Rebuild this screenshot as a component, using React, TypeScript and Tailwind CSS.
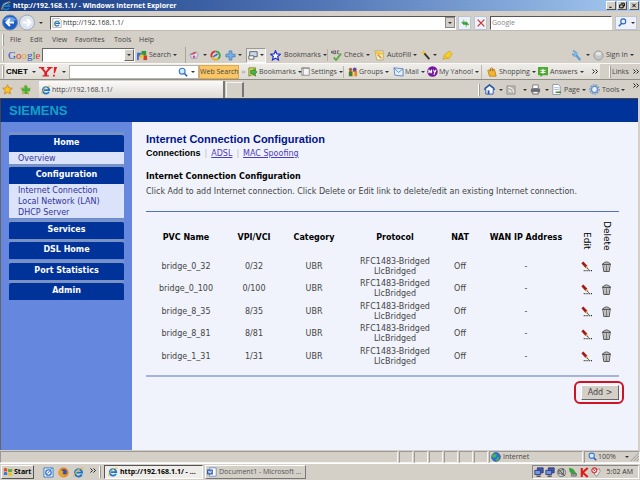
import { useState } from "react";
import type { ReactNode } from "react";

const CONNECTIONS = [
  { name: "bridge_0_32", vpi: "0/32" },
  { name: "bridge_0_100", vpi: "0/100" },
  { name: "bridge_8_35", vpi: "8/35" },
  { name: "bridge_8_81", vpi: "8/81" },
  { name: "bridge_1_31", vpi: "1/31" },
];

const MENU = [
  { title: "Home", links: ["Overview"] },
  { title: "Configuration", links: ["Internet Connection", "Local Network (LAN)", "DHCP Server"] },
  { title: "Services", links: [] },
  { title: "DSL Home", links: [] },
  { title: "Port Statistics", links: [] },
  { title: "Admin", links: [] },
];

function Icon({ children, className = "size-3" }: { children: ReactNode; className?: string }) {
  return (
    <svg viewBox="0 0 12 12" className={`shrink-0 ${className}`} fill="none" aria-hidden="true">
      {children}
    </svg>
  );
}

function IeIcon({ className = "size-3" }: { className?: string }) {
  return (
    <Icon className={className}>
      <path d="M9.6 8.2A4 4 0 1 1 10 6.2H3.6" stroke="#1b75c9" strokeWidth="2" />
      <path d="M2.6 5.2Q4 2.6 7 3" stroke="#5cc0f5" strokeWidth="1" />
      <path d="M1.5 11C-.6 9.3 3.2 4.3 7.3 2c2-1.100 3.700-1.200 3.900.2" stroke="#f0b429" strokeWidth="1.100" />
    </Icon>
  );
}

function PageIeIcon() {
  return (
    <Icon className="size-[10px]">
      <path d="M1 .5h8l2 2v9H1z" fill="#fff" stroke="#aaa" />
      <path d="M8.500 8A2.800 2.800 0 1 1 8.800 6.400H4" stroke="#1b75c9" strokeWidth="1.500" />
      <path d="M2.500 9.500C2 7.500 6 3 9.500 3" stroke="#e0b040" strokeWidth=".8" />
    </Icon>
  );
}

function Caret({ className = "" }: { className?: string }) {
  return (
    <svg viewBox="0 0 4 2" className={`h-[2px] w-1 shrink-0 ${className}`} aria-hidden="true">
      <path d="M0 0h4L2 2z" fill="#333" />
    </svg>
  );
}

function Grip() {
  return <span className="h-3 w-px shrink-0 bg-white shadow-[1px_0_0_#9c9a94]" />;
}

function Magnifier({ className }: { className?: string }) {
  return (
    <Icon className={className}>
      <circle cx="5" cy="5" r="3.500" fill="#d5ebff" stroke="#3b78d8" strokeWidth="1.400" />
      <path d="M8 8l3 3" stroke="#2456b0" strokeWidth="1.800" />
    </Icon>
  );
}

function Tool({ className, icon, label, caret = true }: { className: string; icon: ReactNode; label?: string; caret?: boolean }) {
  return (
    <button type="button" aria-label={label ? undefined : "Toolbar item"} className={`flex shrink-0 items-center gap-px whitespace-nowrap ${className}`}>
      {icon}
      {label && <span>{label}</span>}
      {caret && <Caret className="ml-px" />}
    </button>
  );
}

function Chevrons() {
  return (
    <svg viewBox="0 0 6 5" className="h-[5px] w-[6px] shrink-0" fill="none" aria-hidden="true">
      <path d="M.5.5l2 2-2 2M3.500.5l2 2-2 2" stroke="#222" />
    </svg>
  );
}

function TitleBar() {
  return (
    <header className="flex h-[11px] items-center bg-gradient-to-r from-[#153a83] via-[#5276b5] to-[#a6caf0] pl-px text-white">
      <IeIcon className="size-[10px]" />
      <h1 className="ml-[2px] flex-1 text-[7px] font-bold">http://192.168.1.1/ - Windows Internet Explorer</h1>
      <div className="mr-px flex gap-px">
        {["M3 9h4", "M4 2h6v5H8M2 5h6v5H2z", "M3 3l6 6M9 3l-6 6"].map((d, i) => (
          <button
            key={d}
            type="button"
            aria-label={["Minimize", "Restore", "Close"][i]}
            className={`h-[9px] w-[10px] border border-t-white border-r-[#555] border-b-[#555] border-l-white bg-[#d4d0c8] ${i === 2 ? "ml-px" : ""}`}
          >
            <Icon className="h-[7px] w-2">
              <path d={d} stroke="#000" strokeWidth="1.700" />
            </Icon>
          </button>
        ))}
      </div>
    </header>
  );
}

function AddressRow() {
  const [address, setAddress] = useState("http://192.168.1.1/");
  const square = "flex h-[14px] items-center justify-center border border-[#b8c4d8] bg-[#eef2f8]";

  return (
    <div className="flex h-[17px] items-center border-b border-[#bfbbb3] pt-px pr-[3px] pl-[2px]">
      <svg viewBox="0 0 34 17" className="h-[17px] w-[34px] shrink-0" fill="none" aria-hidden="true">
        <rect x="4" y="2" width="26" height="13" fill="#c7cad0" />
        <circle cx="8" cy="8.500" r="7.500" fill="#1c5fc4" stroke="#6d86ad" />
        <path d="M2 6a6.500 5 0 0 1 12 0q-6 3-12 0" fill="#6ba0e6" />
        <path d="M12 8.500H5M8 5L4.500 8.500 8 12" stroke="#fff" strokeWidth="2" />
        <circle cx="25" cy="8.500" r="7.500" fill="#dfe5ef" stroke="#9da8ba" />
        <path d="M21 8.500h7M25 5l3.500 3.500L25 12" stroke="#fff" strokeWidth="2" />
      </svg>
      <Caret className="mx-[3px]" />
      <div className="ml-[4px] flex h-[14px] flex-1 items-center border border-t-[#555] border-r-white border-b-white border-l-[#555] bg-white pl-px">
        <PageIeIcon />
        <input
          aria-label="Address"
          value={address}
          onChange={(e) => setAddress(e.target.value)}
          className="ml-px min-w-0 flex-1 text-[7px] text-[#333] outline-none"
        />
        <button type="button" aria-label="Show addresses" className="flex h-[11px] w-[10px] items-center justify-center border border-[#888] bg-[#d4d0c8]">
          <Caret />
        </button>
      </div>
      <button type="button" aria-label="Refresh" className={`ml-[2px] w-[13px] ${square}`}>
        <Icon className="size-[10px]">
          <path d="M4.500 2v3M4.500 8L2 5h5zM7.500 11V8M7.500 4.500L5.500 8h5z" stroke="#2f9e33" fill="#2f9e33" strokeWidth=".7" />
        </Icon>
      </button>
      <button type="button" aria-label="Stop" className={`mx-[3px] w-[13px] ${square}`}>
        <Icon className="size-[10px]">
          <path d="M2 2l8 8M10 2l-8 8" stroke="#c83232" strokeWidth="1.500" />
        </Icon>
      </button>
      <input
        aria-label="Search the web"
        placeholder="Google"
        className="h-[14px] w-[122px] border border-t-[#555] border-r-white border-b-white border-l-[#555] bg-white pl-px text-[7px] outline-none placeholder:text-[#888]"
      />
      <button type="button" aria-label="Search" className={`ml-[3px] w-[22px] gap-[4px] ${square}`}>
        <Icon className="size-[9px]">
          <circle cx="7" cy="4.500" r="3.300" stroke="#2563cc" strokeWidth="1.500" />
          <path d="M5 7l-4 4" stroke="#2563cc" strokeWidth="2" />
        </Icon>
        <Caret />
      </button>
    </div>
  );
}

function MenuBar() {
  return (
    <nav className="flex h-[16px] items-center pt-[2px] pl-[2px]">
      <Grip />
      <button type="button" className="ml-[7px] w-5 text-left">File</button>
      <button type="button" className="w-[22px] text-left">Edit</button>
      <button type="button" className="w-[23px] text-left">View</button>
      <button type="button" className="w-[39px] text-left">Favorites</button>
      <button type="button" className="w-[25px] text-left">Tools</button>
      <button type="button" className="text-left">Help</button>
    </nav>
  );
}

function GoogleBar() {
  return (
    <div className="flex h-4 items-center pl-[2px]">
      <Grip />
      <span className="ml-[5px] w-[34px] font-['Liberation_Serif',serif] text-[11px] leading-none">
        <span className="text-[#2a55c8]">G</span>
        <span className="text-[#d83a2a]">o</span>
        <span className="text-[#e0a81c]">o</span>
        <span className="text-[#2a55c8]">g</span>
        <span className="text-[#2b9a42]">l</span>
        <span className="text-[#d83a2a]">e</span>
      </span>
      <div className="flex h-[14px] w-[93px] shrink-0 border border-t-[#666] border-l-[#666] border-r-white border-b-white bg-white">
        <input aria-label="Google search" className="min-w-0 flex-1 outline-none" />
        <button type="button" aria-label="Search history" className="flex w-[10px] items-center justify-center border border-t-white border-r-[#666] border-b-[#666] border-l-white bg-[#d4d0c8]">
          <Caret />
        </button>
      </div>
      <Tool
        className="ml-[2px] w-[45px]"
        label="Search"
        icon={
          <Icon className="size-[11px]">
            <path d="M0 3h5v4H2v4H0z" fill="#3b70d8" />
            <path d="M5 1h5v5H5z" fill="#2a9b3c" />
            <path d="M7 6h4v5H7z" fill="#d63b2f" />
            <path d="M3 5h4v4H3z" fill="#f5c329" />
          </Icon>
        }
      />
      <span className="flex w-[7px] justify-center"><span className="h-4 w-px bg-[#aaa69e]" /></span>
      <Tool
        className="w-[21px]"
        icon={
          <Icon className="mr-[2px] size-[10px]">
            <path d="M1 5l8-3 2 3-2 5H3z" fill="#d9e2f2" stroke="#8d9bb5" />
            <path d="M2 5l5-3 2 2-6 2z" fill="#d64a4a" />
            <circle cx="6" cy="8" r="1.500" fill="#d64a8a" />
          </Icon>
        }
      />
      <Tool
        className="w-[15px]"
        caret={false}
        icon={
          <Icon className="size-[11px]">
            <path d="M6 1.500A4.500 4.500 0 0 0 2 8" stroke="#d73434" strokeWidth="2" />
            <path d="M2 8a4.500 4.500 0 0 0 7 1.500" stroke="#e3b21b" strokeWidth="2" />
            <path d="M9 9.500a4.500 4.500 0 0 0-3-8" stroke="#3aa346" strokeWidth="2" />
            <path d="M4 8c0-3 3-1 4-4" stroke="#3563c9" strokeWidth="1.500" />
          </Icon>
        }
      />
      <Tool
        className="w-[20px]"
        icon={
          <Icon className="size-[11px]">
            <path d="M4.500 1h3v3.500H11v3H7.500V11h-3V7.500H1v-3h3.500z" fill="#79b0e4" stroke="#3d7ab8" strokeWidth=".8" />
          </Icon>
        }
      />
      <Tool
        className="ml-px h-[15px] w-[20px] border border-t-[#999] border-l-[#999] border-r-white border-b-white bg-[#eae8e3] pl-px"
        icon={
          <Icon className="size-[10px]">
            <path d="M2 2h9v6H2z" fill="#c6d9ee" stroke="#555" />
            <path d="M1 7h6v4H1z" fill="#fff" stroke="#555" />
          </Icon>
        }
      />
      <Tool
        className="ml-[4px] w-[57px]"
        label="Bookmarks"
        icon={
          <Icon className="mr-[2px] size-[11px]">
            <path d="M6 .8l1.500 3.500 3.800.3-2.900 2.500.9 3.800L6 8.900l-3.300 2 .9-3.800L.7 4.600l3.800-.3z" fill="#fff" stroke="#2434d0" strokeWidth="1.300" />
          </Icon>
        }
      />
      <span className="mr-[3px] h-3 w-px bg-[#b4b0a8]" />
      <Tool
        className="w-[43px]"
        label="Check"
        icon={
          <Icon className="mr-px size-[11px]">
            <path d="M0 4l1-3 1 3M3 1v3h2V1zM9 1H7v3h2" stroke="#333" strokeWidth=".7" />
            <path d="M3 8l2.500 3L11 4" stroke="#5fa843" strokeWidth="2" />
          </Icon>
        }
      />
      <Tool
        className="w-[47px]"
        label="AutoFill"
        icon={
          <Icon className="mr-px size-[11px]">
            <path d="M1 1h9v10H3z" fill="#f3ecd0" stroke="#b9a876" />
            <path d="M1 1l2 4h7V3z" fill="#f5c82d" />
            <path d="M4 5l4 4" stroke="#d69318" strokeWidth="1.500" />
          </Icon>
        }
      />
      <Tool
        className="w-[21px]"
        icon={
          <Icon className="size-[10px]">
            <path d="M4 4l6 7" stroke="#333" strokeWidth="2.200" />
            <path d="M3 0v6M0 3h6" stroke="#eac634" strokeWidth="1.300" />
          </Icon>
        }
      />
      <Tool
        className="w-3"
        caret={false}
        icon={
          <Icon className="size-[11px]">
            <path d="M1 10l2-5 5-4 3 3-3 5z" fill="#f6cd2b" stroke="#cc9a1b" strokeWidth=".7" />
            <path d="M3 6l4 4" stroke="#d6a015" />
          </Icon>
        }
      />
      <span className="flex-1" />
      <Tool
        className="w-[22px]"
        icon={
          <Icon className="mr-[2px] size-[11px]">
            <path d="M5 5l5 6" stroke="#5c9ed6" strokeWidth="2.500" />
            <path d="M2 1l2.500 1.500L4 5 1.500 4c0 3 3 3.500 4.500 2C8 4.500 6 .5 2 1z" fill="#8cc3ee" stroke="#4a8cc4" strokeWidth=".7" />
          </Icon>
        }
      />
      <Tool
        className="mr-[5px] w-[42px]"
        label="Sign In"
        icon={
          <Icon className="mr-px size-[11px]">
            <circle cx="6" cy="6" r="5" fill="#c5c5c5" stroke="#999" />
            <ellipse cx="6" cy="4" rx="3" ry="2" fill="#e6e6e6" />
          </Icon>
        }
      />
    </div>
  );
}

function YahooBar() {
  return (
    <div className="flex h-[17px] items-center border-t border-b border-t-[#f8f8f6] border-b-[#8f8d88] pl-[2px]">
      <Grip />
      <div className="ml-[2px] flex h-full flex-1 items-center bg-gradient-to-b from-[#eeede9] to-[#dedbd4]">
        <button type="button" className="flex w-[33px] items-center gap-[4px] pl-px">
          <span className="font-['Liberation_Sans',sans-serif] text-[8px] font-bold text-black">CNET</span>
          <Caret />
        </button>
        <button type="button" aria-label="Yahoo" className="flex w-[31px] items-center gap-[4px]">
          <svg viewBox="0 0 20 12" className="h-[11px] w-5" aria-hidden="true">
            <path d="M0 1h6v1.500H5L7.500 6l3-3.500H9V1h6v1.500h-1.500L9 7v3h2v1.500H4V10h2V7L2 2.500H0zM16.500 1H20l-2.500 7h-1.200zM15.500 9.500h2v2h-2z" fill="#e01d2b" />
          </svg>
          <Caret />
        </button>
        <div className="flex h-[14px] w-[130px] shrink-0 items-center border border-[#b5b3ae] bg-white">
          <input aria-label="Yahoo search" className="min-w-0 flex-1 outline-none" />
          <Magnifier className="size-[10px]" />
          <Caret className="mx-[3px]" />
        </div>
        <button type="button" className="h-[14px] w-[40px] shrink-0 border border-[#dfa94a] bg-[#fbc766] whitespace-nowrap">
          Web Search
        </button>
        <span className="flex w-[9px] shrink-0 justify-center text-[#777]">‹›</span>
        <Tool
          className="w-[53px]"
          label="Bookmarks"
          icon={
            <Icon className="size-[10px]">
              <path d="M1 1h8v10L6 9l-5 2z" fill="#e9d45a" stroke="#6d8c32" />
              <path d="M3 4h4V2l4 4-4 4V8H3z" fill="#44b449" stroke="#217d2a" strokeWidth=".6" />
            </Icon>
          }
        />
        <Tool
          className="w-[42px]"
          label="Settings"
          icon={
            <Icon className="size-[9px]">
              <path d="M1 1h10v10H1z" fill="#f5f5f5" stroke="#777" />
              <path d="M1 2h10M3 1v10" stroke="#888" />
            </Icon>
          }
        />
        <span className="mr-[4px] h-3 w-px bg-[#bbb7b0]" />
        <Tool
          className="w-[45px]"
          label="Groups"
          icon={
            <Icon className="size-[10px]">
              <path d="M1 11V6q2-3 4 0v5z" fill="#477b35" />
              <path d="M5 11V5q3-3 6 0v6z" fill="#d58e22" />
              <circle cx="3" cy="3" r="2" fill="#a6682f" />
              <circle cx="8" cy="3" r="2.300" fill="#65489b" />
              <path d="M7 6v5" stroke="#fff" />
            </Icon>
          }
        />
        <Tool
          className="w-[34px]"
          label="Mail"
          icon={
            <Icon className="size-[11px]">
              <path d="M1 2l10 1v8L2 10z" fill="#e4effb" stroke="#5887c5" />
              <path d="M1 2l5 5 5-4" stroke="#5887c5" />
            </Icon>
          }
        />
        <Tool
          className="w-[54px]"
          label="My Yahoo!"
          icon={
            <Icon className="size-[11px]">
              <circle cx="6" cy="6" r="5.700" fill="#73189e" />
              <path d="M2 8V4l1.500 3L5 4v4M7 4l1.500 3L10 4M8.500 7L7.500 9.500" stroke="#fff" strokeWidth="1.100" />
            </Icon>
          }
        />
        <span className="mr-[5px] h-[14px] w-px bg-[#bbb7b0]" />
        <Tool
          className="w-[51px]"
          label="Shopping"
          icon={
            <Icon className="mr-px size-[10px]">
              <path d="M1 4l8-1 2 8H3z" fill="#f2b72e" stroke="#c07c17" />
              <path d="M4 5V2q2-2 3 0v3" stroke="#a65d15" />
            </Icon>
          }
        />
        <Tool
          className="w-[54px]"
          label="Answers"
          icon={
            <Icon className="mr-px size-[10px]">
              <path d="M0 0h12v10H6l-3 2v-2H0z" fill="#4bab31" />
              <path d="M6 2v6M3 3.500l6 3M9 3.500l-6 3" stroke="#fff" strokeWidth="1.300" />
            </Icon>
          }
        />
        <Chevrons />
      </div>
      <div className="flex w-[40px] items-center gap-[2px] pl-[9px]">
        <Grip />
        <span>Links</span>
        <span className="ml-[2px]"><Chevrons /></span>
      </div>
    </div>
  );
}

function TabRow() {
  return (
    <div className="flex h-[18px] items-center pt-px pl-[2px]">
      <button type="button" aria-label="Favorites" className="w-[18px]">
        <Icon className="size-[11px]">
          <path d="M6 .8l1.500 3.500 3.800.3-2.900 2.500.9 3.800L6 8.900l-3.300 2 .9-3.800L.7 4.600l3.800-.3z" fill="#ffc529" stroke="#d18a17" />
        </Icon>
      </button>
      <button type="button" aria-label="Add favorite" className="w-[19px]">
        <Icon className="size-[11px]">
          <path d="M6 1l1.500 3.500 3.800.3-2.900 2.500.9 3.700L6 8.900l-3.300 2 .9-3.800L.7 4.600l3.800-.3z" fill="#e5d23a" stroke="#c79a25" />
          <path d="M3 4h3V1h3v3h3v3H9v3H6V7H3z" fill="#3fb243" transform="translate(-1 1)" />
        </Icon>
      </button>
      <div className="flex h-full w-[186px] items-center gap-px border-r-2 border-r-[#777] bg-gradient-to-b from-[#fafafa] to-[#dddad4] pl-[2px]">
        <IeIcon className="size-[10px]" />
        <span>http://192.168.1.1/</span>
      </div>
      <button type="button" aria-label="New tab" className="ml-px h-[15px] w-[18px] border-t border-r-2 border-l border-t-[#f4f4f2] border-r-[#777] border-l-[#f4f4f2]" />
      <span className="flex-1" />
      <Grip />
      <Tool
        className="ml-[5px] w-[22px]"
        icon={
          <Icon className="mr-[2px] size-[11px]">
            <path d="M0 6l6-5 6 5H10v5H2V6z" fill="#f4f7fd" stroke="#2855a6" />
            <path d="M4 7h2v4H4z" fill="#2855a6" />
            <path d="M1 5l5-4 5 4" stroke="#2855a6" strokeWidth="1.800" />
          </Icon>
        }
      />
      <Tool
        className="w-[24px]"
        icon={
          <Icon className="mr-[5px] size-[10px]">
            <path d="M1 1h10v10H1z" fill="#b7b4ae" stroke="#999" />
            <path d="M3 3q6 0 6 6M3 6q3 0 3 3M3 8.500h1" stroke="#fff" strokeWidth="1.200" />
          </Icon>
        }
      />
      <Tool
        className="w-[21px]"
        icon={
          <Icon className="mr-[2px] size-[11px]">
            <path d="M3 1h6v4H3z" fill="#fff" stroke="#777" />
            <path d="M1 5h10v4H1z" fill="#696e77" />
            <path d="M3 8h6v3H3z" fill="#f1f1f1" stroke="#666" />
          </Icon>
        }
      />
      <Tool
        className="w-[38px]"
        label="Page"
        icon={
          <Icon className="mr-px size-[11px]">
            <path d="M2 .5h6l2 2v9H2z" fill="#fff" stroke="#8894a8" />
            <path d="M3.500 4h5M3.500 6h5" stroke="#9fb7d8" />
            <path d="M5 9h6" stroke="#3f8b3d" strokeWidth="1.600" />
          </Icon>
        }
      />
      <Tool
        className="w-[44px]"
        label="Tools"
        icon={
          <Icon className="mr-px size-[11px]">
            <circle cx="6" cy="6" r="5" stroke="#6fa0d0" strokeWidth="1.500" strokeDasharray="2 1" />
            <circle cx="6" cy="6" r="3.300" fill="#e5f0fa" stroke="#6a91be" strokeWidth="1.400" />
          </Icon>
        }
      />
      <span className="mr-px -mt-2"><Chevrons /></span>
    </div>
  );
}

function Sidebar() {
  return (
    <nav className="w-[132px] shrink-0 border-l border-[#666] bg-[#6587de] pt-[10px] pr-2 pl-2 text-[8px]">
      {MENU.map((group) => (
        <section key={group.title} className="border-t-[3px] border-[#7892c5] even:mb-px">
          <h2 className="h-[17px] rounded-t-[2px] bg-[#003399] text-center leading-[16px] font-bold text-white">{group.title}</h2>
          {group.links.length > 0 && (
            <ul className="bg-[#dbe3fb] pt-px pl-[9px] leading-[11px] text-[#33339a]">
              {group.links.map((link) => (
                <li key={link}>
                  <a href="#" className="whitespace-nowrap">{link}</a>
                </li>
              ))}
            </ul>
          )}
        </section>
      ))}
    </nav>
  );
}

function EditIcon() {
  return (
    <Icon className="size-[11px]">
      <path d="M1.500 1.500l4.500 5" stroke="#a81818" strokeWidth="3" />
      <path d="M5.500 6l2 2.500" stroke="#d6b060" strokeWidth="2" />
      <path d="M7 8l1.500 1.500" stroke="#222" />
      <path d="M3 10.500h9" stroke="#222" strokeWidth="1.100" strokeDasharray="1 1" />
    </Icon>
  );
}

function TrashIcon() {
  return (
    <Icon className="size-[11px]">
      <path d="M2 3.500l1 8h6l1-8z" fill="#fff" stroke="#333" strokeWidth=".9" />
      <path d="M1.500 3.500q4.500-5 9 0z" fill="#ddd" stroke="#333" strokeWidth=".9" />
      <path d="M4.200 4l.3 7M6 4v7M7.800 4l-.3 7" stroke="#333" strokeWidth=".7" />
    </Icon>
  );
}

function ConnectionTable() {
  return (
    <div className="border-t border-b-2 border-t-[#5571bd] border-b-[#a5b4d7] pb-[7px]">
      <table className="w-full table-fixed text-center text-[8px] leading-[10px] text-[#444]">
        <colgroup>
          <col className="w-[80px]" />
          <col className="w-[56px]" />
          <col className="w-[64px]" />
          <col className="w-[98px]" />
          <col className="w-[32px]" />
          <col className="w-[100px]" />
          <col className="w-[22px]" />
          <col className="w-[21px]" />
        </colgroup>
        <thead className="text-black">
          <tr className="h-[43px]">
            {["PVC Name", "VPI/VCI", "Category", "Protocol", "NAT", "WAN IP Address"].map((head) => (
              <th key={head} className="pt-[9px] font-bold whitespace-nowrap">{head}</th>
            ))}
            <th className="pt-[16px] text-[9px] font-normal">
              <span className="inline-block [writing-mode:vertical-rl]">Edit</span>
            </th>
            <th className="pt-[6px] pr-[3px] text-[9px] font-normal">
              <span className="inline-block [writing-mode:vertical-rl]">Delete</span>
            </th>
          </tr>
        </thead>
        <tbody>
          {CONNECTIONS.map((row) => (
            <tr key={row.name} className="odd:h-[23px] even:h-[22px]">
              <td>{row.name}</td>
              <td>{row.vpi}</td>
              <td>UBR</td>
              <td>
                RFC1483-Bridged
                <br />
                LlcBridged
              </td>
              <td>Off</td>
              <td>-</td>
              <td>
                <button type="button" aria-label={`Edit ${row.name}`} className="block w-full pl-[5px]">
                  <EditIcon />
                </button>
              </td>
              <td>
                <button type="button" aria-label={`Delete ${row.name}`} className="block w-full pl-[3px]">
                  <TrashIcon />
                </button>
              </td>
            </tr>
          ))}
        </tbody>
      </table>
    </div>
  );
}

function StatusBar() {
  const cell = "h-[12px] shrink-0 border border-t-[#999] border-r-[#f5f5f3] border-b-[#f5f5f3] border-l-[#999]";

  return (
    <div className="flex h-[13px] items-center gap-px bg-[#d4d0c8]">
      <span className={`flex-1 ${cell}`} />
      {[0, 1, 2, 3, 4, 5].map((i) => (
        <span key={i} className={`w-[14px] ${cell}`} />
      ))}
      <span className={`flex w-[94px] items-center gap-[2px] pl-px ${cell}`}>
        <Icon className="size-[10px]">
          <circle cx="6" cy="6" r="5.300" fill="#2e73d2" stroke="#1d4f9b" strokeWidth=".7" />
          <path d="M3 2l4 1-1 3-3 1-2-2zM7 7l3-1-1 4-3 1z" fill="#49b64b" />
        </Icon>
        Internet
      </span>
      <button type="button" className={`flex w-[56px] items-center gap-px pl-[3px] ${cell}`}>
        <Magnifier className="size-[9px]" />
        100%
        <Caret className="ml-[8px]" />
        <Icon className="ml-auto size-[9px]">
          <path d="M1 12L12 1M5 12l7-7M9 12l3-3" stroke="#888" />
        </Icon>
      </button>
    </div>
  );
}

function Taskbar() {
  return (
    <footer className="flex h-[17px] items-center border-t border-white bg-[#d4d0c8] pr-px pl-px text-black">
      <button type="button" className="flex h-[14px] w-[33px] items-center gap-px border border-t-white border-r-[#555] border-b-[#555] border-l-white pl-px font-bold">
        <Icon className="size-[10px]">
          <path d="M1 2q2-1.500 4 0v3.500q-2-1-4 0z" fill="#e44b28" />
          <path d="M6 2q2 1.500 5 0v3.500q-3 1.500-5 0z" fill="#5aa834" />
          <path d="M1 6.500q2-1 4 0V10q-2-1.500-4 0z" fill="#3272d6" />
          <path d="M6 6.500q2 1.500 5 0V10q-3 1.500-5 0z" fill="#f2c121" />
        </Icon>
        Start
      </button>
      <span className="mr-[3px] ml-[5px]"><Grip /></span>
      <Icon className="ml-px size-[11px]">
        <path d="M1 1h10v10H1z" fill="#e4f2ff" stroke="#3a7ac0" />
        <circle cx="6" cy="6" r="3" stroke="#2c6cb6" strokeWidth="1.300" />
        <path d="M5 7l5-6" stroke="#3a7ac0" />
      </Icon>
      <Icon className="ml-[4px] size-[11px]">
        <circle cx="6" cy="6" r="5.500" fill="#ea7a1b" />
        <circle cx="6.500" cy="5.500" r="3" fill="#2b55a6" />
        <path d="M1 4q2-2 3 0l2 1-1 2q2 2 5 1-3 4-7 2-3-2-2-6" fill="#e8a52b" />
      </Icon>
      <IeIcon className="ml-[4px] size-[11px]" />
      <span className="mr-[3px] ml-[6px] mb-[4px]"><Chevrons /></span>
      <Grip />
      <button type="button" className="ml-[4px] flex h-[14px] w-[99px] items-center gap-[2px] border border-t-[#555] border-r-white border-b-white border-l-[#555] bg-[#efede9] pl-[3px] font-bold whitespace-nowrap">
        <IeIcon className="size-[10px]" />
        http://192.168.1.1/ - ...
      </button>
      <button type="button" className="ml-[2px] flex h-[14px] w-[101px] items-center gap-[2px] border border-t-white border-r-[#777] border-b-[#777] border-l-white pl-px whitespace-nowrap text-[#555]">
        <Icon className="size-[10px]">
          <path d="M3 1h8v10H3z" fill="#fff" stroke="#6b8cc4" />
          <path d="M0 3h7v6H0z" fill="#2e5cb0" />
          <path d="M1.500 4.500l1 3 1-3 1 3 1-3" stroke="#fff" strokeWidth=".8" />
        </Icon>
        Document1 - Microsoft ...
      </button>
      <span className="flex-1" />
      <div className="flex h-[14px] w-[107px] items-center gap-px border border-t-[#888] border-r-white border-b-white border-l-[#888] pl-px text-[#333]">
        {[0, 1].map((i) => (
          <Icon key={i} className="size-[10px]">
            <path d="M4 1h7v6H4z" fill="#4058b4" stroke="#26346f" />
            <path d="M1 4h7v5H1z" fill="#7593e8" stroke="#26346f" />
            <path d="M3 11h5" stroke="#333" strokeWidth="1.400" />
          </Icon>
        ))}
        <Icon className="size-[11px]">
          <circle cx="6" cy="6" r="4.500" fill="#c8c8c8" stroke="#777" />
          <path d="M3 4h2l3-2v7L5 7H3zM10 10L2 2" stroke="#555" />
        </Icon>
        <Icon className="size-[10px]">
          <path d="M1 1l5 1 5 7-3 2-6-5z" fill="#37a63a" />
          <path d="M4 8h6v3H4z" fill="#9a9a9a" stroke="#555" strokeWidth=".6" />
        </Icon>
        <Icon className="size-[11px]">
          <path d="M3 1v10M9.500 1L4 6l5.500 5" stroke="#e01919" strokeWidth="2.300" />
        </Icon>
        <Icon className="size-[10px]">
          <path d="M5 4l5-2 1 3-4 6-3-2z" fill="#eee" stroke="#888" />
          <circle cx="4" cy="4" r="3" fill="#fff" stroke="#d92929" strokeWidth="1.300" />
          <path d="M2.500 2.500l3 3M5.500 2.500l-3 3" stroke="#d92929" />
        </Icon>
        <span className="ml-auto pr-[5px] whitespace-nowrap">5:02 AM</span>
      </div>
    </footer>
  );
}

export default function App() {
  return (
    <div className="flex min-h-screen flex-col bg-[#d4d0c8] font-['Open_Sans','Noto_Sans',sans-serif] text-[7px] leading-[10px] text-[#444]">
      <TitleBar />
      <div className="pt-[3px]">
        <AddressRow />
        <MenuBar />
        <GoogleBar />
        <YahooBar />
        <TabRow />
      </div>

      <div className="mr-[2px] flex flex-1 flex-col font-['DejaVu_Sans',sans-serif]">
        <div className="flex h-[24px] items-center border-t border-l border-[#444] bg-[#003399] pl-2 font-['Liberation_Sans',sans-serif] text-[13px] font-bold text-[#14a0c4]">
          SIEMENS
        </div>
        <div className="flex flex-1">
          <Sidebar />
          <main className="flex min-w-0 flex-1 flex-col bg-[#f0f3fb] pt-[10px] pr-[19px] pl-[14px]">
            <h2 className="font-['Liberation_Sans',sans-serif] text-[11px] leading-[15px] font-bold text-[#00138a]">
              Internet Connection Configuration
            </h2>
            <nav className="flex gap-[4px] text-[8px] leading-[13px]">
              <span className="font-['Liberation_Sans',sans-serif] text-[9px] font-bold text-black">Connections</span>
              <span className="text-[#bbb]">|</span>
              <a href="#" className="text-[#4a3cc0] underline">ADSL</a>
              <span className="text-[#bbb]">|</span>
              <a href="#" className="text-[#4a3cc0] underline">MAC Spoofing</a>
            </nav>
            <h3 className="mt-[11px] text-[8px] leading-[12px] font-bold text-black">Internet Connection Configuration</h3>
            <p className="mt-[2px] mb-[13px] text-[8px] leading-[13px] whitespace-nowrap">
              Click Add to add Internet connection. Click Delete or Edit link to delete/edit an existing Internet connection.
            </p>
            <ConnectionTable />
            <div className="-mr-[5px] mt-[4px] self-end rounded-[6px] border-2 border-[#d01225] p-[2px] pr-[3px] pl-[5px]">
              <button type="button" className="block h-[15px] w-[38px] border border-t-white border-r-[#666] border-b-[#666] border-l-white bg-[#d4d0c8] text-[8px] leading-[13px]">
                Add &gt;
              </button>
            </div>
          </main>
        </div>
      </div>

      <StatusBar />
      <Taskbar />
    </div>
  );
}
